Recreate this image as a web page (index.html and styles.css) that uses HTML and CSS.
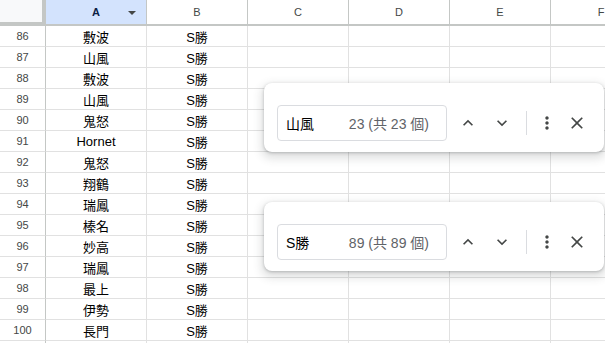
FILE: index.html
```html
<!DOCTYPE html>
<html>
<head>
<meta charset="utf-8">
<link rel="stylesheet" href="styles.css">
</head>
<body>
<div class="sheet">
  <div class="corner"></div>
  <div class="colhead selected">A<span class="caret"></span></div>
  <div class="colhead">B</div>
  <div class="colhead">C</div>
  <div class="colhead">D</div>
  <div class="colhead">E</div>
  <div class="colhead">F</div>

  <div class="rowhead">86</div><div class="cell">敷波</div><div class="cell">S勝</div><div class="cell"></div><div class="cell"></div><div class="cell"></div><div class="cell"></div>
  <div class="rowhead">87</div><div class="cell">山風</div><div class="cell">S勝</div><div class="cell"></div><div class="cell"></div><div class="cell"></div><div class="cell"></div>
  <div class="rowhead">88</div><div class="cell">敷波</div><div class="cell">S勝</div><div class="cell"></div><div class="cell"></div><div class="cell"></div><div class="cell"></div>
  <div class="rowhead">89</div><div class="cell">山風</div><div class="cell">S勝</div><div class="cell"></div><div class="cell"></div><div class="cell"></div><div class="cell"></div>
  <div class="rowhead">90</div><div class="cell">鬼怒</div><div class="cell">S勝</div><div class="cell"></div><div class="cell"></div><div class="cell"></div><div class="cell"></div>
  <div class="rowhead">91</div><div class="cell">Hornet</div><div class="cell">S勝</div><div class="cell"></div><div class="cell"></div><div class="cell"></div><div class="cell"></div>
  <div class="rowhead">92</div><div class="cell">鬼怒</div><div class="cell">S勝</div><div class="cell"></div><div class="cell"></div><div class="cell"></div><div class="cell"></div>
  <div class="rowhead">93</div><div class="cell">翔鶴</div><div class="cell">S勝</div><div class="cell"></div><div class="cell"></div><div class="cell"></div><div class="cell"></div>
  <div class="rowhead">94</div><div class="cell">瑞鳳</div><div class="cell">S勝</div><div class="cell"></div><div class="cell"></div><div class="cell"></div><div class="cell"></div>
  <div class="rowhead">95</div><div class="cell">榛名</div><div class="cell">S勝</div><div class="cell"></div><div class="cell"></div><div class="cell"></div><div class="cell"></div>
  <div class="rowhead">96</div><div class="cell">妙高</div><div class="cell">S勝</div><div class="cell"></div><div class="cell"></div><div class="cell"></div><div class="cell"></div>
  <div class="rowhead">97</div><div class="cell">瑞鳳</div><div class="cell">S勝</div><div class="cell"></div><div class="cell"></div><div class="cell"></div><div class="cell"></div>
  <div class="rowhead">98</div><div class="cell">最上</div><div class="cell">S勝</div><div class="cell"></div><div class="cell"></div><div class="cell"></div><div class="cell"></div>
  <div class="rowhead">99</div><div class="cell">伊勢</div><div class="cell">S勝</div><div class="cell"></div><div class="cell"></div><div class="cell"></div><div class="cell"></div>
  <div class="rowhead">100</div><div class="cell">長門</div><div class="cell">S勝</div><div class="cell"></div><div class="cell"></div><div class="cell"></div><div class="cell"></div>
  <div class="rowhead"></div><div class="cell"></div><div class="cell"></div><div class="cell"></div><div class="cell"></div><div class="cell"></div><div class="cell"></div>
</div>

<div class="find find-1">
  <div class="field"><span class="query">山風</span><span class="count">23 (共 23 個)</span></div>
  <button class="btn btn-up"><svg viewBox="0 0 24 24" width="20" height="20"><path d="M12 8l-6 6 1.41 1.41L12 10.83l4.59 4.58L18 14z"/></svg></button>
  <button class="btn"><svg viewBox="0 0 24 24" width="20" height="20"><path d="M16.590 8.59L12 13.17 7.41 8.59 6 10l6 6 6-6z"/></svg></button>
  <span class="sep"></span>
  <button class="btn"><svg viewBox="0 0 24 24" width="20" height="20"><path d="M12 8c1.1 0 2-.9 2-2s-.9-2-2-2-2 .9-2 2 .9 2 2 2zm0 2c-1.1 0-2 .9-2 2s.9 2 2 2 2-.9 2-2-.9-2-2-2zm0 6c-1.1 0-2 .9-2 2s.9 2 2 2 2-.9 2-2-.9-2-2-2z"/></svg></button>
  <button class="btn"><svg viewBox="0 0 24 24" width="20" height="20"><path d="M19 6.41L17.59 5 12 10.59 6.41 5 5 6.41 10.59 12 5 17.59 6.41 19 12 13.41 17.59 19 19 17.59 13.41 12z"/></svg></button>
</div>

<div class="find find-2">
  <div class="field"><span class="query">S勝</span><span class="count">89 (共 89 個)</span></div>
  <button class="btn btn-up"><svg viewBox="0 0 24 24" width="20" height="20"><path d="M12 8l-6 6 1.41 1.41L12 10.83l4.59 4.58L18 14z"/></svg></button>
  <button class="btn"><svg viewBox="0 0 24 24" width="20" height="20"><path d="M16.59 8.59L12 13.17 7.41 8.59 6 10l6 6 6-6z"/></svg></button>
  <span class="sep"></span>
  <button class="btn"><svg viewBox="0 0 24 24" width="20" height="20"><path d="M12 8c1.1 0 2-.9 2-2s-.9-2-2-2-2 .9-2 2 .9 2 2 2zm0 2c-1.1 0-2 .9-2 2s.9 2 2 2 2-.9 2-2-.9-2-2-2zm0 6c-1.1 0-2 .9-2 2s.9 2 2 2 2-.9 2-2-.9-2-2-2z"/></svg></button>
  <button class="btn"><svg viewBox="0 0 24 24" width="20" height="20"><path d="M19 6.41L17.59 5 12 10.59 6.41 5 5 6.41 10.59 12 5 17.59 6.41 19 12 13.41 17.59 19 19 17.59 13.41 12z"/></svg></button>
</div>
</body>
</html>
```

FILE: styles.css
```css
* { box-sizing: border-box; }
html, body {
  margin: 0;
  padding: 0;
  width: 605px;
  height: 343px;
  overflow: hidden;
  background: #fff;
  font-family: "Liberation Sans", Arial, "Noto Sans CJK TC", sans-serif;
}
.sheet {
  display: grid;
  grid-template-columns: 46px 101px 101px 101px 101px 101px 101px;
  grid-template-rows: 26px;
  grid-auto-rows: 21px;
  width: 605px;
  height: 343px;
  overflow: hidden;
}
.corner {
  background: #f8f9fa;
  border-right: 1px solid #c4c7c5;
  border-bottom: 2px solid #c4c7c5;
  box-shadow: inset -3px -2px 0 #c4c7c5;
}
.colhead {
  position: relative;
  display: flex;
  align-items: center;
  justify-content: center;
  font-size: 11px;
  color: #444746;
  background: #fff;
  border-right: 1px solid #c4c7c5;
  border-bottom: 2px solid #c4c7c5;
}
.colhead.selected {
  background: #d3e3fd;
  color: #0b1f45;
  font-weight: bold;
}
.caret {
  position: absolute;
  right: 10px;
  top: 11px;
  width: 0;
  height: 0;
  border-left: 4px solid transparent;
  border-right: 4px solid transparent;
  border-top: 4px solid #444746;
}
.rowhead {
  display: flex;
  align-items: center;
  justify-content: center;
  font-size: 11px;
  color: #444746;
  background: #fff;
  border-right: 1px solid #c4c7c5;
  border-bottom: 1px solid #e1e1e1;
}
.cell {
  display: flex;
  align-items: center;
  justify-content: center;
  font-size: 13px;
  color: #000;
  border-right: 1px solid #e1e1e1;
  border-bottom: 1px solid #e1e1e1;
  white-space: nowrap;
  overflow: hidden;
}
.find {
  position: absolute;
  left: 264px;
  width: 340px;
  height: 69px;
  padding: 22px 10px 11px 13px;
  background: #fff;
  border-radius: 8px;
  box-shadow: 0 1px 3px rgba(60,64,67,0.3), 0 4px 8px 3px rgba(60,64,67,0.15);
  display: flex;
  align-items: center;
}
.find-1 { top: 83px; }
.find-2 { top: 202px; }
.field {
  width: 170px;
  height: 36px;
  border: 1px solid #dadce0;
  border-radius: 4px;
  display: flex;
  align-items: center;
  justify-content: space-between;
  padding: 0 17px 0 8px;
  font-size: 14px;
}
.query { color: #000; }
.count { color: #5f6368; }
.btn {
  width: 30px;
  height: 30px;
  padding: 0;
  border: 0;
  background: transparent;
  display: flex;
  align-items: center;
  justify-content: center;
  fill: #444746;
}
.btn-up { margin-left: 6px; margin-right: 4px; }
.sep {
  width: 1px;
  height: 24px;
  background: #dadce0;
  margin: 0 5px 0 9px;
}
```
